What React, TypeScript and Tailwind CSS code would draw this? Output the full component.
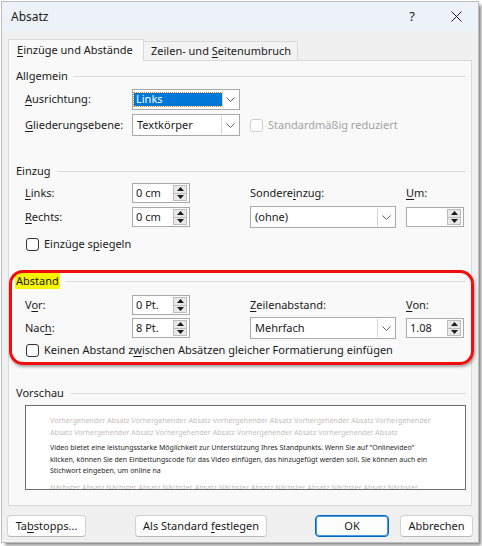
import type { ReactNode } from "react"

function U(props: { children: ReactNode }) {
  return <span className="underline decoration-1 underline-offset-[2px]">{props.children}</span>
}

function SectionHeader(props: { children: ReactNode; highlight?: boolean }) {
  return (
    <div className="flex h-4 items-center">
      <span className={props.highlight ? "bg-[#f5f500] px-px -ml-px leading-4" : "leading-4"}>{props.children}</span>
      <div className="ml-[6px] h-px flex-1 bg-[#dcdcdc]" />
    </div>
  )
}

function Chevron() {
  return (
    <svg width="9" height="5" viewBox="0 0 9 5" className="text-[#5f5f5f]">
      <path d="M0.5 0.5 L4.5 4.5 L8.5 0.5" fill="none" stroke="currentColor" strokeWidth="1" />
    </svg>
  )
}

function Select(props: { value: string; width: string; selected?: boolean }) {
  return (
    <div className={`flex h-full items-stretch border border-[#a9a9a9] bg-white ${props.width}`}>
      <div className="flex flex-1 items-center pl-[1px]">
        {props.selected ? (
          <span className="flex h-[13px] w-[88px] items-center bg-[#0078d7] pl-[2px] text-white outline-1 outline-dotted outline-[#c98a2b]">
            {props.value}
          </span>
        ) : (
          <span className="pl-[3px]">{props.value}</span>
        )}
      </div>
      <div className="my-px mr-px flex w-[17px] items-center justify-center border-l border-[#d6d6d6] bg-white">
        <Chevron />
      </div>
    </div>
  )
}

function Spinner(props: { value?: string }) {
  return (
    <div className="flex h-[20px] w-[58px] items-center border border-[#a9a9a9] bg-white">
      <span className="flex-1 pl-[3px]">{props.value}</span>
      <div className="mr-[2px] flex h-[16px] w-[14px] flex-col border border-[#bcbcbc] bg-[#e8e8e8]">
        <div className="flex flex-1 items-center justify-center border-b border-[#bcbcbc]">
          <svg width="7" height="4" viewBox="0 0 7 4">
            <polygon points="3.5,0 7,4 0,4" fill="#1a1a1a" />
          </svg>
        </div>
        <div className="flex flex-1 items-center justify-center">
          <svg width="7" height="4" viewBox="0 0 7 4">
            <polygon points="0,0 7,0 3.5,4" fill="#1a1a1a" />
          </svg>
        </div>
      </div>
    </div>
  )
}

function Checkbox(props: { children: ReactNode; disabled?: boolean }) {
  return (
    <div className={`flex h-4 items-center gap-[5px] ${props.disabled ? "text-[#a3a3a3]" : ""}`}>
      <div
        className={`h-[13px] w-[13px] rounded-[3px] border bg-white ${
          props.disabled ? "border-[#cfcfcf]" : "border-[#333333]"
        }`}
      />
      <span className="whitespace-nowrap">{props.children}</span>
    </div>
  )
}

function Button(props: { children: ReactNode; width: string; primary?: boolean }) {
  return (
    <button
      className={`flex h-[22px] items-center justify-center rounded-[4px] border bg-[#fdfdfd] ${props.width} ${
        props.primary
          ? "border-[#0067c0] shadow-[inset_0_0_0_1px_#4a9ae0]"
          : "border-[#d2d2d2] border-b-[#b8b8b8]"
      }`}
    >
      <span className="whitespace-nowrap">{props.children}</span>
    </button>
  )
}

const prevLines = [
  "Vorhergehender Absatz Vorhergehender Absatz Vorhergehender Absatz Vorhergehender Absatz Vorhergehender",
  "Absatz Vorhergehender Absatz Vorhergehender Absatz Vorhergehender Absatz Vorhergehender Absatz",
]

const bodyLines = [
  'Video bietet eine leistungsstarke Möglichkeit zur Unterstützung Ihres Standpunkts. Wenn Sie auf "Onlinevideo"',
  "klicken, können Sie den Einbettungscode für das Video einfügen, das hinzugefügt werden soll. Sie können auch ein",
  "Stichwort eingeben, um online na",
]

export default function App() {
  return (
    <div className="h-[546px] w-[482px] bg-white pl-[2px] pt-[2px] font-['Noto_Sans',sans-serif] text-[11px] text-[#1a1a1a]">
      <div className="flex h-[540px] w-[476px] flex-col bg-[#f0f0f0] shadow-[0_0_0_1px_#bdbdbd,3px_3px_3px_rgba(0,0,0,0.5)]">
        {/* title bar */}
        <div className="flex h-[29px] items-center bg-[#edf2f8] pl-[9px] text-[12px]">
          <span className="flex-1">Absatz</span>
          <span className="mr-[36px] text-[13px]">?</span>
          <svg width="11" height="11" viewBox="0 0 11 11" className="mr-[16px]">
            <path d="M0.5 0.5 L10.5 10.5 M10.5 0.5 L0.5 10.5" stroke="#1a1a1a" strokeWidth="1" />
          </svg>
        </div>

        {/* tabs */}
        <div className="ml-[6px] mt-[8px] flex items-end whitespace-nowrap">
          <div className="relative z-10 -mb-px flex h-[22px] w-[136px] items-center border border-b-0 border-[#d9d9d9] bg-[#f9f9f9] pl-[8px]">
            <span>
              <U>E</U>inzüge und Abstände
            </span>
          </div>
          <div className="flex h-[19px] w-[154px] items-center border border-b-0 border-l-0 border-[#d9d9d9] bg-[#f3f3f3] pl-[7px]">
            <span>
              Zeilen- und <U>S</U>eitenumbruch
            </span>
          </div>
        </div>

        {/* panel */}
        <div className="ml-[6px] flex h-[446px] w-[464px] flex-col border border-[#d9d9d9] bg-[#f9f9f9] pl-[7px] pr-[5px] pt-[7px]">
          <SectionHeader>Allgemein</SectionHeader>
          <div className="mt-[5px] flex h-[21px] items-center pl-[9px]">
            <span className="w-[107px]">
              <U>A</U>usrichtung:
            </span>
            <Select value="Links" width="w-[108px]" selected />
          </div>
          <div className="mt-[4px] flex h-[22px] items-center pl-[9px]">
            <span className="w-[107px]">
              <U>G</U>liederungsebene:
            </span>
            <Select value="Textkörper" width="w-[108px]" />
            <div className="ml-[10px]">
              <Checkbox disabled>Standardmäßig reduziert</Checkbox>
            </div>
          </div>

          <div className="mt-[27px]">
            <SectionHeader>Einzug</SectionHeader>
          </div>
          <div className="mt-[4px] flex h-[20px] items-center pl-[9px]">
            <span className="w-[107px]">
              <U>L</U>inks:
            </span>
            <Spinner value="0 cm" />
            <span className="ml-[60px] w-[156px]">
              Sondere<U>i</U>nzug:
            </span>
            <span>
              <U>U</U>m:
            </span>
          </div>
          <div className="mt-[3px] flex h-[22px] items-center pl-[9px]">
            <span className="w-[107px]">
              <U>R</U>echts:
            </span>
            <Spinner value="0 cm" />
            <div className="ml-[60px] h-[22px]">
              <Select value="(ohne)" width="w-[146px]" />
            </div>
            <div className="ml-[10px]">
              <Spinner />
            </div>
          </div>
          <div className="mt-[8px] pl-[10px]">
            <Checkbox>
              Einzüge s<U>p</U>iegeln
            </Checkbox>
          </div>

          {/* Abstand, marked in red */}
          <div className="relative mt-[21px]">
            <div className="pointer-events-none absolute -bottom-[7px] -left-[7px] -right-[8px] -top-[3px] rounded-[14px] border-[3px] border-[#f20d0d] shadow-[1px_2px_3px_rgba(0,0,0,0.35)]" />
            <SectionHeader highlight>Abstand</SectionHeader>
            <div className="mt-[6px] flex h-[20px] items-center pl-[9px]">
              <span className="w-[107px]">
                V<U>o</U>r:
              </span>
              <Spinner value="0 Pt." />
              <span className="ml-[60px] w-[156px]">
                <U>Z</U>eilenabstand:
              </span>
              <span>
                <U>V</U>on:
              </span>
            </div>
            <div className="mt-[2px] flex h-[22px] items-center pl-[9px]">
              <span className="w-[107px]">
                Nac<U>h</U>:
              </span>
              <Spinner value="8 Pt." />
              <div className="ml-[60px] h-[22px]">
                <Select value="Mehrfach" width="w-[146px]" />
              </div>
              <div className="ml-[10px]">
                <Spinner value="1.08" />
              </div>
            </div>
            <div className="mt-[3px] pl-[10px]">
              <Checkbox>
                Keinen Abstand z<U>w</U>ischen Absätzen gleicher Formatierung einfügen
              </Checkbox>
            </div>
          </div>

          <div className="mt-[27px]">
            <SectionHeader>Vorschau</SectionHeader>
          </div>
          <div className="ml-[9px] mt-[4px] h-[85px] w-[441px] overflow-hidden border border-[#6e6e6e] bg-white pl-[24px] pt-[9px] text-[7px] leading-[12px]">
            {prevLines.map((l) => (
              <div key={l} className="whitespace-nowrap tracking-[0.07px] text-[#c4bcbc]">
                {l}
              </div>
            ))}
            <div className="mt-[3px] leading-[11.5px]">
              {bodyLines.map((l) => (
                <div key={l} className="whitespace-nowrap text-[#262626]">
                  {l}
                </div>
              ))}
            </div>
            <div className="mt-[5px] whitespace-nowrap tracking-[0.07px] text-[#c4bcbc]">
              Nächster Absatz Nächster Absatz Nächster Absatz Nächster Absatz Nächster Absatz Nächster Absatz Nächster
            </div>
          </div>
        </div>

        {/* buttons */}
        <div className="mt-[9px] flex items-center pl-[5px]">
          <Button width="w-[79px]">
            Ta<U>b</U>stopps...
          </Button>
          <div className="ml-[49px]">
            <Button width="w-[132px]">
              Als Standard <U>f</U>estlegen
            </Button>
          </div>
          <div className="ml-[48px]">
            <Button width="w-[74px]" primary>
              OK
            </Button>
          </div>
          <div className="ml-[11px]">
            <Button width="w-[73px]">Abbrechen</Button>
          </div>
        </div>
      </div>
    </div>
  )
}
